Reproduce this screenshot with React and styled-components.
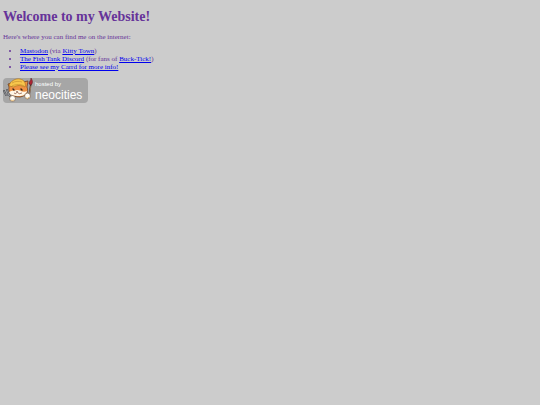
import React from 'react';
import styled, { createGlobalStyle } from 'styled-components';

const GlobalStyle = createGlobalStyle`
  body {
    margin: 0;
    background-color: #cccccc;
    color: #663399;
    font-family: 'Liberation Serif', 'Times New Roman', serif;
    font-size: 7px;
    line-height: 8px;
  }
`;

const Page = styled.main`
  padding: 9px 3px 3px;
`;

const Title = styled.h1`
  margin: 0 0 8px;
  font-size: 14px;
  line-height: 16px;
`;

const Intro = styled.p`
  margin: 0 0 6px;
`;

const LinkList = styled.ul`
  margin: 0 0 7px;
  padding-left: 17px;
`;

const TextLink = styled.a`
  color: #0000ee;
`;

const Badge = styled.a`
  display: inline-flex;
  align-items: center;
  box-sizing: border-box;
  width: 85px;
  height: 25px;
  border-radius: 4px;
  background-color: #a6a6a6;
  color: #fff;
  font-family: 'Liberation Sans', Arial, sans-serif;
  text-decoration: none;
`;

const Cat = styled.svg`
  flex: none;
  width: 32px;
  height: 25px;
`;

const BadgeText = styled.span`
  display: flex;
  flex-direction: column;
`;

const HostedBy = styled.span`
  font-size: 6px;
  line-height: 8px;
`;

const Brand = styled.span`
  font-size: 12px;
  line-height: 14px;
`;

function CatLogo() {
  return (
    <Cat viewBox="0 0 32 25" aria-hidden="true">
      {/* head */}
      <path
        d="M6 9 L5 6 L8 5 C11 2 17 1 20 4 L25 3 L24 9 C26 14 23 18 17 19 C9 19 5 16 6 9 Z"
        fill="#ef9142"
        stroke="#5d351d"
        strokeWidth="0.7"
      />
      <path d="M6 14 C9 12 12 13 14 12 C17 12 20 15 24 13 C23 17 20 18 16 18 C10 18 7 17 6 14 Z" fill="#fff6e6" />
      {/* cap */}
      <path
        d="M6 8 C7 3 13 0 17 1 C22 2 23 6 22 9 C18 7 14 7 11 9 Z"
        fill="#f7c64c"
        stroke="#a56c1f"
        strokeWidth="0.6"
      />
      <path d="M9 5 C12 3 16 3 19 4 M9 8 C13 6 18 6 21 8" fill="none" stroke="#c18a2c" strokeWidth="0.6" />
      {/* face */}
      <path d="M10 11 L11 12 M18 11 L19 12" stroke="#382319" strokeWidth="1.4" strokeLinecap="round" />
      <path d="M13 13 L15 13 L14 14 Z" fill="#54332b" />
      <path d="M11 15 Q13 17 14 14 Q16 17 19 15" fill="none" stroke="#8c4c35" strokeWidth="0.7" />
      {/* fork */}
      <path
        d="M1 13 L3 17 L6 17 L9 20 M4 12 L6 17"
        fill="none"
        stroke="#424348"
        strokeWidth="1.7"
        strokeLinecap="round"
        strokeLinejoin="round"
      />
      <path d="M1 13 L3 17 L6 17 L9 20 M4 12 L6 17" fill="none" stroke="#c9cbce" strokeWidth="0.6" />
      {/* brush */}
      <path d="M28 5 L26 18" stroke="#55372c" strokeWidth="1.6" strokeLinecap="round" />
      <path d="M28 8 L26 17" stroke="#dfbd83" strokeWidth="0.5" />
      <path d="M26 6 C26 3 28 3 28 0 C30 3 30 5 28 7 Z" fill="#ae2432" stroke="#592026" strokeWidth="0.5" />
      {/* paws */}
      <circle cx="9.5" cy="20.5" r="2.9" fill="#fffdf8" stroke="#6b4a2e" strokeWidth="0.6" />
      <circle cx="24.5" cy="18" r="2.9" fill="#fffdf8" stroke="#6b4a2e" strokeWidth="0.6" />
      <path d="M8 22 Q9 23 11 22 M23 20 Q25 21 26 19" fill="none" stroke="#edb962" strokeWidth="0.8" />
    </Cat>
  );
}

function App() {
  return (
    <>
      <GlobalStyle />
      <Page>
        <Title>Welcome to my Website!</Title>
        <Intro>Here's where you can find me on the internet:</Intro>
        <LinkList>
          <li>
            <TextLink href="#mastodon">Mastodon</TextLink> (via <TextLink href="#kitty-town">Kitty Town</TextLink>)
          </li>
          <li>
            <TextLink href="#discord">The Fish Tank Discord</TextLink> (for fans of{' '}
            <TextLink href="#buck-tick">Buck-Tick!</TextLink>)
          </li>
          <li>
            <TextLink href="#carrd">Please see my Carrd for more info!</TextLink>
          </li>
        </LinkList>
        <Badge href="#neocities">
          <CatLogo />
          <BadgeText>
            <HostedBy>hosted by</HostedBy>
            <Brand>neocities</Brand>
          </BadgeText>
        </Badge>
      </Page>
    </>
  );
}

export default App;
